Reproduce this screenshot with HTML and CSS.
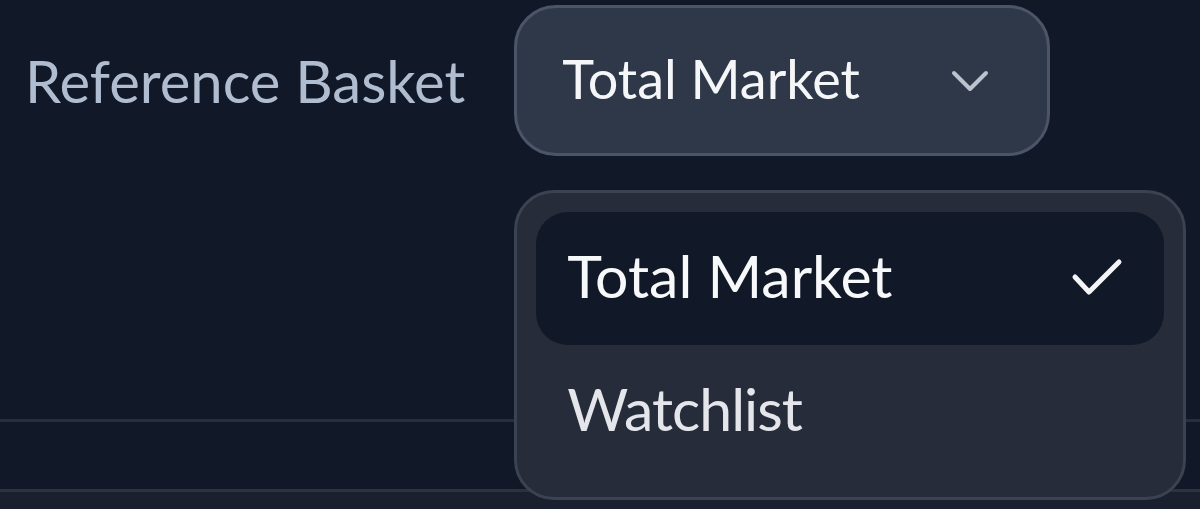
FILE: index.html
```html
<!DOCTYPE html>
<html>
<head>
<meta charset="utf-8">
<link rel="stylesheet" href="styles.css">
</head>
<body>
<div class="page">
  <div class="row">
    <span class="label">Reference Basket</span>
    <div class="select-wrap">
      <button class="select">
        <span class="select-text">Total Market</span>
        <svg class="chev" width="40" height="28" viewBox="0 0 40 28"><path d="M4 5 L20 21 L36 5" fill="none" stroke="#bcc3ce" stroke-width="4" stroke-linecap="round" stroke-linejoin="round"/></svg>
      </button>
      <div class="menu">
        <div class="item selected">
          <span>Total Market</span>
          <svg class="check" width="52" height="42" viewBox="0 0 52 42"><path d="M4 20 L18 35 L48 5" fill="none" stroke="#f3f4f6" stroke-width="5" stroke-linecap="round" stroke-linejoin="round"/></svg>
        </div>
        <div class="item">
          <span class="tight">Watchlist</span>
        </div>
      </div>
    </div>
  </div>
  <div class="spacer"></div>
  <div class="line"></div>
  <div class="gap"></div>
  <div class="footer"></div>
</div>
</body>
</html>
```
FILE: styles.css
```css
* { box-sizing: border-box; }
html, body { margin: 0; padding: 0; }
body {
  background: #111827;
  font-family: Lato, "Liberation Sans", sans-serif;
  width: 1200px;
  height: 509px;
  overflow: hidden;
}
.page {
  display: flex;
  flex-direction: column;
  height: 509px;
}
.row {
  display: flex;
  align-items: center;
  gap: 49px;
  padding: 5px 0 0 25px;
}
.label {
  font-size: 58px;
  color: #b0bdd0;
}
.select-wrap { position: relative; }
.select {
  display: flex;
  align-items: center;
  justify-content: space-between;
  width: 536px;
  height: 151px;
  padding: 0 57px 0 45px;
  background: #2e3849;
  border: 3px solid #4b5567;
  border-radius: 42px;
  font-family: inherit;
  font-size: 54px;
  color: #f5f6f8;
}
.select-text { padding-bottom: 4px; }
.chev { margin-top: 2px; }
.menu {
  position: absolute;
  left: 0;
  top: 185px;
  width: 672px;
  height: 310px;
  padding: 19px;
  background: #262c3a;
  border: 3px solid #3b4252;
  border-radius: 40px;
  display: flex;
  flex-direction: column;
  z-index: 2;
}
.item {
  height: 135px;
  display: flex;
  align-items: center;
  justify-content: space-between;
  padding: 0 41px 0 31px;
  font-size: 59px;
  color: #e4e6eb;
  border-radius: 32px;
}
.item.selected {
  background: #111827;
  color: #f7f8fa;
  height: 134px;
}
.item span { padding-bottom: 6px; }
.item .tight { letter-spacing: -1px; }
.spacer { height: 263px; }
.line { height: 3px; background: #272e3c; }
.gap { height: 67px; }
.line, .footer { width: 100%; }
.footer {
  flex: 1;
  border-top: 3px solid #2b3240;
  background: #1a202e;
}
```
